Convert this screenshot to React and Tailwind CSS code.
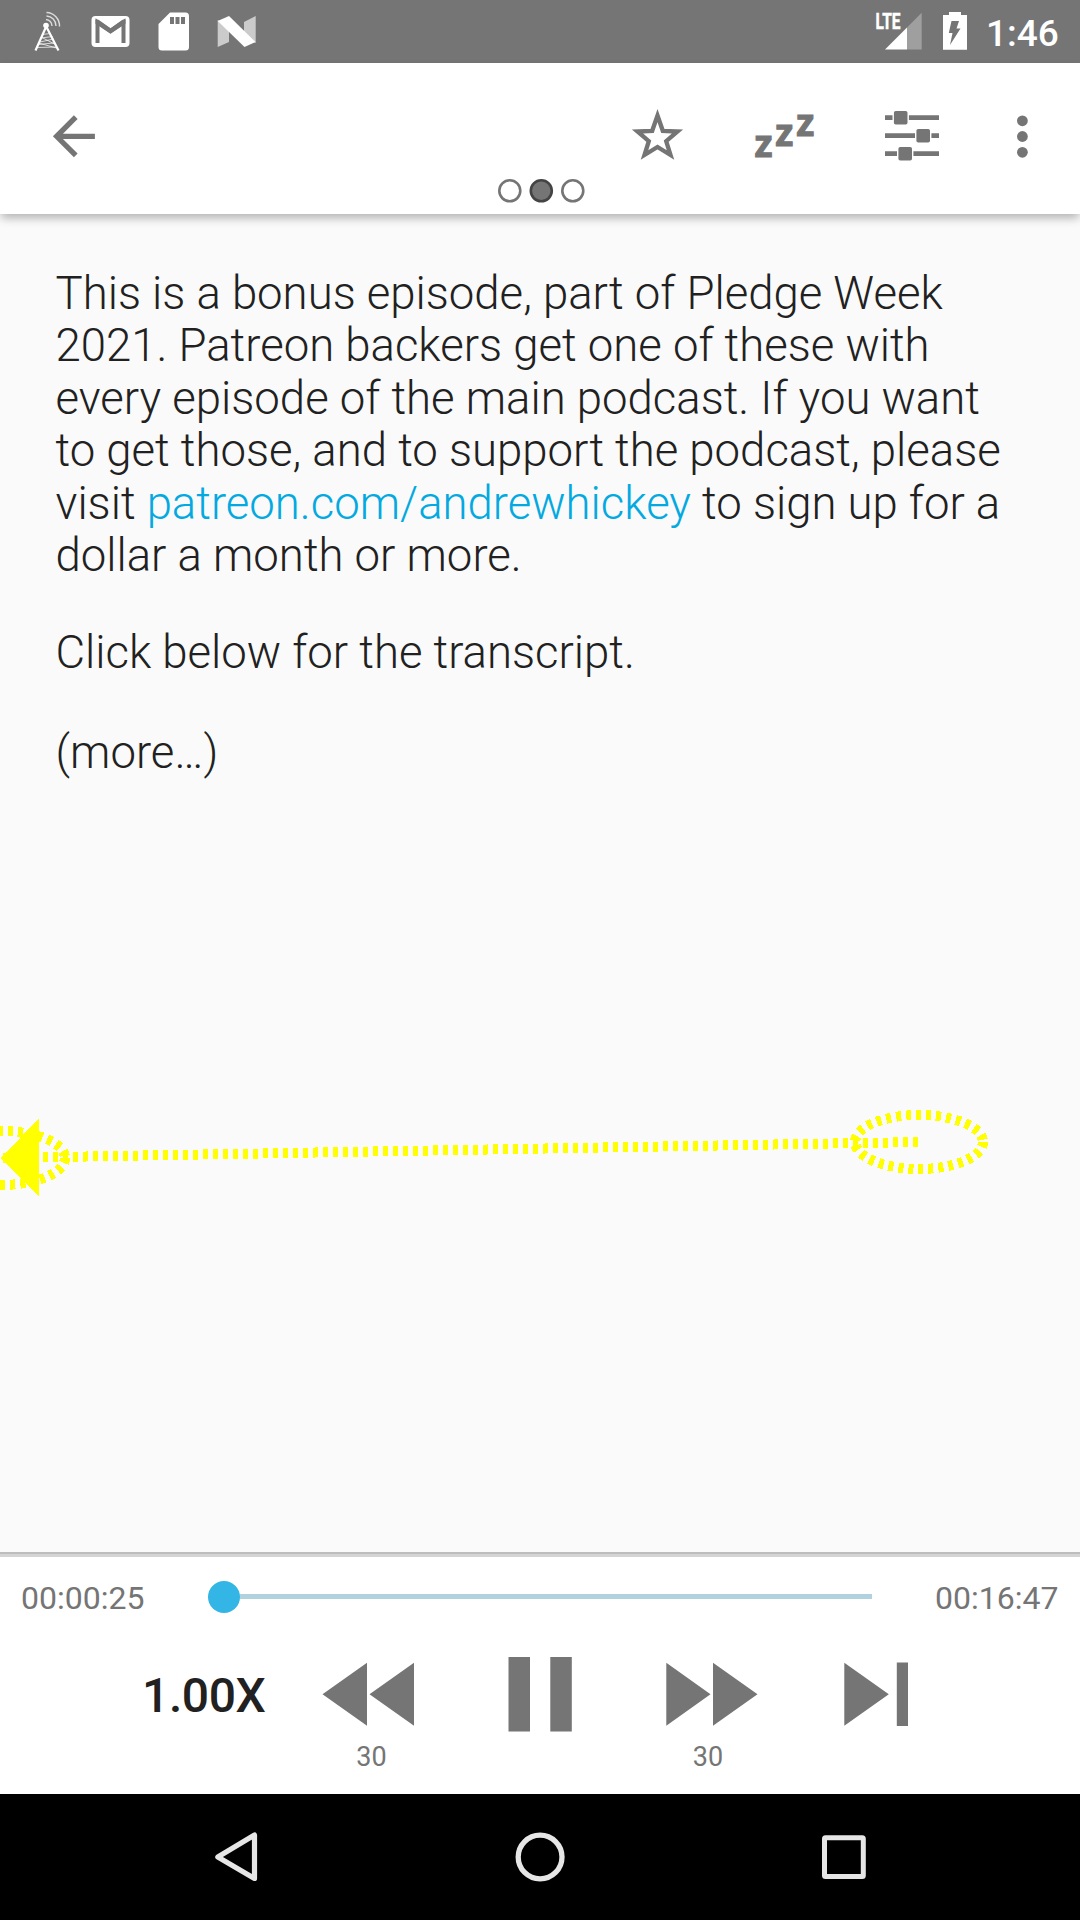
const GRAY = "#757575";

function Icon({ x, y, w, h, className = "", children }) {
  return (
    <svg className={`block shrink-0 ${className}`} width={w} height={h} viewBox={`${x} ${y} ${w} ${h}`}>
      {children}
    </svg>
  );
}

function StatusBar() {
  return (
    <div className="flex h-[63px] items-start bg-[#757575] text-white">
      <Icon x={30} y={0} w={36} h={63} className="ml-[30px]">
        <g fill="none" stroke="#fff">
          <path d="M46 27L35.5 50.5M46.500 27L58.500 50.500" strokeWidth="2.2" />
          <path d="M42.500 34.500L50 33.500M41 38L52.500 36.500M40 42L53.500 39M53.500 43L38 44.500M41 37L54.500 44M38.500 43L56.500 48M37 47.500L56 47" strokeWidth="0.9" opacity="0.8" />
          <path d="M46 19.500a6.500 6.500 0 0 1 6 6.500M46.500 16a10 10 0 0 1 9.500 10M46.500 12.500a13.500 13.500 0 0 1 13 14" strokeWidth="1.4" opacity="0.75" />
        </g>
        <circle cx="46" cy="25.500" r="2.800" fill="#fff" />
      </Icon>
      <Icon x={90} y={0} w={41} h={63} className="ml-[24px]">
        <rect x="91.500" y="16" width="38" height="31" rx="4" fill="#fff" />
        <path d="M97.500 43V22L110.500 31L123.500 22V43" fill="none" stroke={GRAY} strokeWidth="4" />
        <path d="M95.500 19.800h3l12 8.400l12-8.400h3v4l-15 10l-15-10z" fill={GRAY} />
      </Icon>
      <Icon x={157} y={0} w={33} h={63} className="ml-[26px]">
        <path d="M170 12.500h15.500a3.500 3.500 0 0 1 3.500 3.500v31a3.500 3.500 0 0 1-3.500 3.500h-23.500a3.500 3.500 0 0 1-3.500-3.500v-23z" fill="#fff" />
        <path d="M170 17h4v7h-4zM175.500 17h4v7h-4zM181 17h4v7h-4z" fill={GRAY} />
      </Icon>
      <Icon x={216} y={0} w={42} h={63} className="ml-[26px]">
        <path d="M217.700 20L229 27V42L217.700 47zM244 22L255.700 16V43L244 38z" fill="#cbcbcb" />
        <path d="M217.700 21L229 16L255.500 42L244.500 47z" fill="#fff" />
      </Icon>
      <Icon x={874} y={0} w={50} h={63} className="ml-auto">
        <path d="M885 49.500L907 27.500V49.500z" fill="#fff" />
        <path d="M907 27.500L921.700 12.800V49.500H907z" fill="#9f9f9f" />
        <text x="875.500" y="29.300" textLength="25" lengthAdjust="spacingAndGlyphs" fontFamily="Roboto, sans-serif" fontWeight="700" fontSize="22" fill="#fff" stroke="#fff" strokeWidth="0.5">LTE</text>
      </Icon>
      <Icon x={942} y={0} w={26} h={63} className="ml-[18px]">
        <path d="M943 15h6v-3h12v3h6v34.800h-24z" fill="#fff" />
        <path d="M951.500 21H959L956.500 28.500H960.500L950 45L952.500 33H948.800z" fill={GRAY} />
      </Icon>
      <span className="ml-[18px] mr-[20px] w-[74px] whitespace-nowrap pt-[12px] text-[37px] font-medium leading-[43px]">1:46</span>
    </div>
  );
}

function Toolbar() {
  return (
    <div className="relative z-10 flex h-[151px] flex-col bg-white shadow-[0_5px_9px_-1px_rgba(0,0,0,0.29)]">
      <div className="flex h-[107px] items-start">
        <Icon x={42} y={63} w={64} h={107} className="ml-[42px]">
          <path transform="translate(42.400 104.800) scale(2.625)" d="M20 11H7.830l5.590-5.590L12 4l-8 8 8 8 1.410-1.410L7.830 13H20v-2z" fill={GRAY} />
        </Icon>
        <Icon x={630} y={63} w={56} h={107} className="ml-auto">
          <path d="M657.500 115.500L662.800 130.800L677.600 131.500L666.200 141.200L670.500 155L657.500 147L644.500 155L648.800 141.200L637.400 131.500L652.200 130.800z" fill="none" stroke={GRAY} strokeWidth="4.300" />
        </Icon>
        <Icon x={750} y={63} w={68} h={107} className="ml-[64px]">
          <g fill={GRAY} stroke={GRAY} strokeWidth="1" fontFamily="Open Sans, sans-serif" fontWeight="700" fontSize="37">
            <text x="754.500" y="156.700">z</text>
            <text x="775.300" y="146.300">z</text>
            <text x="796.300" y="135.700">z</text>
          </g>
        </Icon>
        <Icon x={884} y={63} w={56} h={107} className="ml-[66px]">
          <path d="M885 117.700H939M885 135.700H939M885 153.700H939" stroke={GRAY} strokeWidth="4.700" />
          <g fill={GRAY} stroke="#fff" strokeWidth="1.400">
            <rect x="893.200" y="110.300" width="15" height="15" rx="2.500" />
            <rect x="915.700" y="128.300" width="15" height="15" rx="2.500" />
            <rect x="897.700" y="146.300" width="15" height="15" rx="2.500" />
          </g>
        </Icon>
        <Icon x={1016} y={63} w={13} h={107} className="ml-[76px] mr-[51px]">
          <g fill={GRAY}>
            <circle cx="1022.400" cy="120.800" r="5.400" />
            <circle cx="1022.400" cy="136.500" r="5.400" />
            <circle cx="1022.400" cy="152.300" r="5.400" />
          </g>
        </Icon>
      </div>
      <Icon x={496} y={170} w={92} h={40} className="ml-[496px]">
        <g stroke={GRAY} strokeWidth="2.600" fill="none">
          <circle cx="509.800" cy="190.800" r="10.500" />
          <circle cx="541.300" cy="190.800" r="10.500" fill={GRAY} stroke="#444" />
          <circle cx="572.800" cy="190.800" r="10.500" />
        </g>
      </Icon>
    </div>
  );
}

function SwipeTrace() {
  return (
    <svg className="mt-auto block h-[110px] w-[1080px] shrink-0" viewBox="0 1105 1080 110" shapeRendering="crispEdges">
      <g fill="none" stroke="#ff0" strokeWidth="10" strokeDasharray="5 5">
        <path d="M918 1142L0 1158" />
        <ellipse cx="919" cy="1142" rx="64" ry="27" />
        <ellipse cx="1" cy="1158" rx="64" ry="27" />
      </g>
      <path d="M1 1158L39 1118V1197z" fill="#ff0" />
    </svg>
  );
}

function Notes() {
  return (
    <div className="flex h-[1338px] flex-col bg-[#fafafa] text-[45.500px] font-light leading-[52.500px] text-[#212121]">
      <div className="whitespace-nowrap pl-[55.500px] pt-[53.700px]">
        <p>
          This is a bonus episode, part of Pledge Week<br />
          2021. Patreon backers get one of these with<br />
          every episode of the main podcast. If you want<br />
          to get those, and to support the podcast, please<br />
          visit <a className="text-[#03a9e0]">patreon.com/andrewhickey</a> to sign up for a<br />
          dollar a month or more.
        </p>
        <p className="mt-[44.500px]">Click below for the transcript.</p>
        <p className="mt-[47.500px]">(more…)</p>
      </div>
      <SwipeTrace />
      <div className="h-[337px] shrink-0" />
    </div>
  );
}

function Player() {
  return (
    <div className="flex h-[242px] flex-col border-t-2 border-[#bdbdbd] bg-white">
      <div className="h-[3px] bg-[#d4d4d4]" />
      <div className="flex h-[78px] items-center text-[32px] leading-[38px] text-[#757575]">
        <span className="ml-[21px] w-[187px] pt-[3px]">00:00:25</span>
        <div className="flex h-[33px] w-[664px] items-center pt-px">
          <div className="size-[32px] shrink-0 rounded-full bg-[#33b5e5]" />
          <div className="h-[5px] flex-1 bg-[#b0d2de]" />
        </div>
        <span className="ml-[63px] pt-[3px]">00:16:47</span>
      </div>
      <div className="flex h-[159px] items-start">
        <span className="ml-[142px] w-[125px] whitespace-nowrap pt-[33px] text-[48px] font-medium leading-[56px] tracking-[-0.4px] text-[#212121]">1.00X</span>
        <div className="ml-[55px] flex w-[93px] flex-col items-center">
          <Icon x={322} y={1634.700} w={93} h={106}>
            <path d="M322.500 1694L367 1662.500V1725.500zM369.500 1694L414 1662.500V1725.500z" fill={GRAY} />
          </Icon>
          <span className="ml-[6px] text-[27px] leading-[32px] text-[#757575]">30</span>
        </div>
        <Icon x={508} y={1634.700} w={65} h={106} className="ml-[93px]">
          <path d="M508.500 1656.700H530V1731.300H508.500zM550.300 1656.700H571.800V1731.300H550.300z" fill={GRAY} />
        </Icon>
        <div className="ml-[92px] flex w-[94px] flex-col items-center">
          <Icon x={665} y={1634.700} w={94} h={106}>
            <path d="M666.300 1662.500L710.500 1694L666.300 1725.500zM713 1662.500L757.500 1694L713 1725.500z" fill={GRAY} />
          </Icon>
          <span className="mr-[8px] text-[27px] leading-[32px] text-[#757575]">30</span>
        </div>
        <Icon x={843} y={1634.700} w={66} h={106} className="ml-[84px]">
          <path d="M844.300 1662.500L888.800 1694L844.300 1725.500zM896.800 1662.300H908V1725.700H896.800z" fill={GRAY} />
        </Icon>
      </div>
    </div>
  );
}

function NavBar() {
  return (
    <div className="flex h-[126px] items-start bg-black">
      <Icon x={210} y={1794} w={50} h={126} className="ml-[210px]">
        <path d="M254.500 1835V1878.500L217.800 1857z" fill="none" stroke="#e6e6e6" strokeWidth="5.200" strokeLinejoin="round" />
      </Icon>
      <Icon x={514} y={1794} w={52} h={126} className="ml-[254px]">
        <circle cx="540.100" cy="1857" r="21.900" fill="none" stroke="#e6e6e6" strokeWidth="5.300" />
      </Icon>
      <Icon x={820} y={1794} w={48} h={126} className="ml-[254px]">
        <rect x="824.500" y="1837.700" width="38.800" height="38.800" rx="1" fill="none" stroke="#e6e6e6" strokeWidth="5" strokeLinejoin="round" />
      </Icon>
    </div>
  );
}

export default function App() {
  return (
    <div className="flex h-[1920px] w-[1080px] flex-col overflow-hidden bg-[#fafafa] font-[Roboto,sans-serif]">
      <StatusBar />
      <Toolbar />
      <Notes />
      <Player />
      <NavBar />
    </div>
  );
}
